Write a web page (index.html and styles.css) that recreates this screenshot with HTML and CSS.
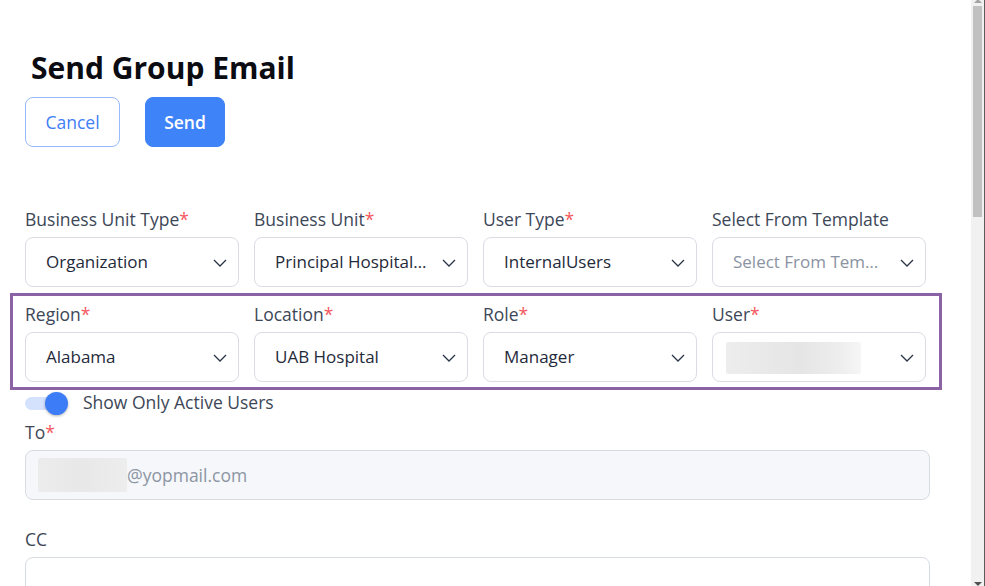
FILE: index.html
```html
<!DOCTYPE html>
<html lang="en">
<head>
<meta charset="utf-8">
<title>Send Group Email</title>
<link rel="stylesheet" href="styles.css">
</head>
<body>
<main class="page">
  <h1 class="title">Send Group Email</h1>
  <div class="actions">
    <button class="btn btn-outline">Cancel</button>
    <button class="btn btn-primary">Send</button>
  </div>

  <div class="grid row-top">
    <div class="field">
      <label class="label">Business Unit Type<span class="req">*</span></label>
      <div class="select"><span class="value">Organization</span><svg class="chev" viewBox="0 0 14 8"><path d="M1 1l6 6 6-6"/></svg></div>
    </div>
    <div class="field">
      <label class="label">Business Unit<span class="req">*</span></label>
      <div class="select"><span class="value">Principal HospitalsNetwork</span><svg class="chev" viewBox="0 0 14 8"><path d="M1 1l6 6 6-6"/></svg></div>
    </div>
    <div class="field">
      <label class="label">User Type<span class="req">*</span></label>
      <div class="select"><span class="value">InternalUsers</span><svg class="chev" viewBox="0 0 14 8"><path d="M1 1l6 6 6-6"/></svg></div>
    </div>
    <div class="field">
      <label class="label">Select From Template</label>
      <div class="select"><span class="value placeholder placeholder-tight">Select From Template</span><svg class="chev" viewBox="0 0 14 8"><path d="M1 1l6 6 6-6"/></svg></div>
    </div>
  </div>

  <div class="highlight">
    <div class="grid">
      <div class="field">
        <label class="label">Region<span class="req">*</span></label>
        <div class="select"><span class="value">Alabama</span><svg class="chev" viewBox="0 0 14 8"><path d="M1 1l6 6 6-6"/></svg></div>
      </div>
      <div class="field">
        <label class="label">Location<span class="req">*</span></label>
        <div class="select"><span class="value">UAB Hospital</span><svg class="chev" viewBox="0 0 14 8"><path d="M1 1l6 6 6-6"/></svg></div>
      </div>
      <div class="field">
        <label class="label">Role<span class="req">*</span></label>
        <div class="select"><span class="value">Manager</span><svg class="chev" viewBox="0 0 14 8"><path d="M1 1l6 6 6-6"/></svg></div>
      </div>
      <div class="field">
        <label class="label">User<span class="req">*</span></label>
        <div class="select select-user"><span class="blur blur-user"></span><svg class="chev" viewBox="0 0 14 8"><path d="M1 1l6 6 6-6"/></svg></div>
      </div>
    </div>
  </div>

  <div class="toggle-row">
    <span class="switch"><span class="knob"></span></span>
    <span class="toggle-text">Show Only Active Users</span>
  </div>

  <div class="field">
    <label class="label">To<span class="req">*</span></label>
    <div class="input input-disabled"><span class="blur blur-to"></span><span class="muted">@yopmail.com</span></div>
  </div>

  <div class="field field-cc">
    <label class="label">CC</label>
    <div class="input"></div>
  </div>

  <div class="field field-cc">
    <label class="label">Subject<span class="req">*</span></label>
    <div class="input"></div>
  </div>

  <div class="field field-cc">
    <label class="label">Message<span class="req">*</span></label>
    <div class="input textarea"></div>
  </div>
</main>

<div class="scrollbar" aria-hidden="true">
  <span class="arrow arrow-up"></span>
  <span class="thumb"></span>
  <span class="arrow arrow-down"></span>
</div>
</body>
</html>
```

FILE: styles.css
```css
* { box-sizing: border-box; }

html, body {
  margin: 0;
  padding: 0;
  background: #ffffff;
}

body {
  font-family: "Open Sans", "Noto Sans", "DejaVu Sans", sans-serif;
  color: #3d4757;
}

.page {
  width: 930px;
  padding: 48px 0 80px 25px;
}

.title {
  margin: 0 0 9px 6px;
  font-size: 30px;
  line-height: 40px;
  font-weight: 700;
  color: #0b0b12;
}

.actions {
  display: flex;
  gap: 25px;
  margin-bottom: 61px;
}

.btn {
  height: 50px;
  border-radius: 8px;
  font-family: inherit;
  font-size: 17.5px;
  padding: 0;
  cursor: pointer;
}

.btn-outline {
  width: 95px;
  background: #ffffff;
  border: 1px solid #97b9fa;
  color: #3f7ef5;
}

.btn-primary {
  width: 80px;
  background: #3f83f8;
  border: 1px solid #3f83f8;
  color: #ffffff;
  font-weight: 600;
}

.grid {
  display: grid;
  grid-template-columns: repeat(4, 214px);
  column-gap: 15px;
}

.row-top {
  margin-bottom: 6px;
}

.field {
  display: flex;
  flex-direction: column;
}

.label {
  font-size: 17.5px;
  line-height: 23px;
  color: #3d4757;
  margin-bottom: 6px;
}

.req {
  color: #f4585e;
}

.select {
  height: 50px;
  border: 1px solid #d9dce3;
  border-radius: 8px;
  display: flex;
  align-items: center;
  padding: 1px 11px 0 20px;
  gap: 10px;
  background: #ffffff;
}

.value {
  flex: 1;
  min-width: 0;
  font-size: 17px;
  line-height: 24px;
  color: #1f2a3a;
  white-space: nowrap;
  overflow: hidden;
  text-overflow: ellipsis;
  transform: translateY(-1px);
}

.placeholder {
  color: #8a93a2;
}

.placeholder-tight {
  margin-right: 8px;
}

.chev {
  width: 14px;
  height: 8px;
  flex: none;
  fill: none;
  stroke: #2a3547;
  stroke-width: 1.3;
}

.select-user {
  padding-left: 13px;
}

.blur {
  display: block;
  border-radius: 2px;
}

.blur-user {
  width: 135px;
  height: 32px;
  margin-right: auto;
  background: linear-gradient(90deg, #ededed 0%, #e5e5e5 55%, #eeeeee 85%, #f6f6f6 100%);
}

.highlight {
  margin: 0 -12px 0 -15px;
  border: 3px solid #8b63a5;
  padding: 7px 13px 5px 12px;
}

.toggle-row {
  display: flex;
  align-items: center;
  height: 26px;
  margin-bottom: 5px;
}

.switch {
  position: relative;
  width: 38px;
  height: 13px;
  border-radius: 7px;
  background: #d4e2fd;
  flex: none;
}

.knob {
  position: absolute;
  left: 20px;
  top: -5px;
  width: 23px;
  height: 23px;
  border-radius: 50%;
  background: #3c7cf6;
  box-shadow: 0 1px 3px rgba(0, 0, 0, 0.3);
}

.toggle-text {
  margin-left: 20px;
  font-size: 17.5px;
  color: #3d4757;
  transform: translateY(-1px);
}

.input {
  height: 50px;
  border: 1px solid #d7dbe2;
  border-radius: 8px;
  display: flex;
  align-items: center;
  padding: 0 12px;
  background: #ffffff;
}

.input-disabled {
  background: #f5f7fa;
}

.blur-to {
  width: 89px;
  height: 34px;
  background: linear-gradient(90deg, #ececed 0%, #e8e8e9 50%, #ededee 100%);
}

.muted {
  font-size: 17.5px;
  color: #8c95a3;
}

.field-cc {
  margin-top: 28px;
}

.textarea {
  height: 420px;
}

/* Window scrollbar (drawn, as the page is scrolled content) */
.scrollbar {
  position: fixed;
  top: 0;
  right: 0;
  width: 14px;
  height: 100vh;
  background: #f1f1f1;
  border-right: 1px solid #5c5c5c;
}

.thumb {
  position: absolute;
  top: 6px;
  left: 2px;
  width: 9px;
  height: 211px;
  background: #c1c1c1;
}

.arrow {
  position: absolute;
  left: 3px;
  width: 0;
  height: 0;
  border-left: 4px solid transparent;
  border-right: 4px solid transparent;
}

.arrow-up {
  top: -1px;
  border-bottom: 4px solid #a3a3a3;
}

.arrow-down {
  bottom: 0;
  border-top: 4px solid #505050;
}
```
